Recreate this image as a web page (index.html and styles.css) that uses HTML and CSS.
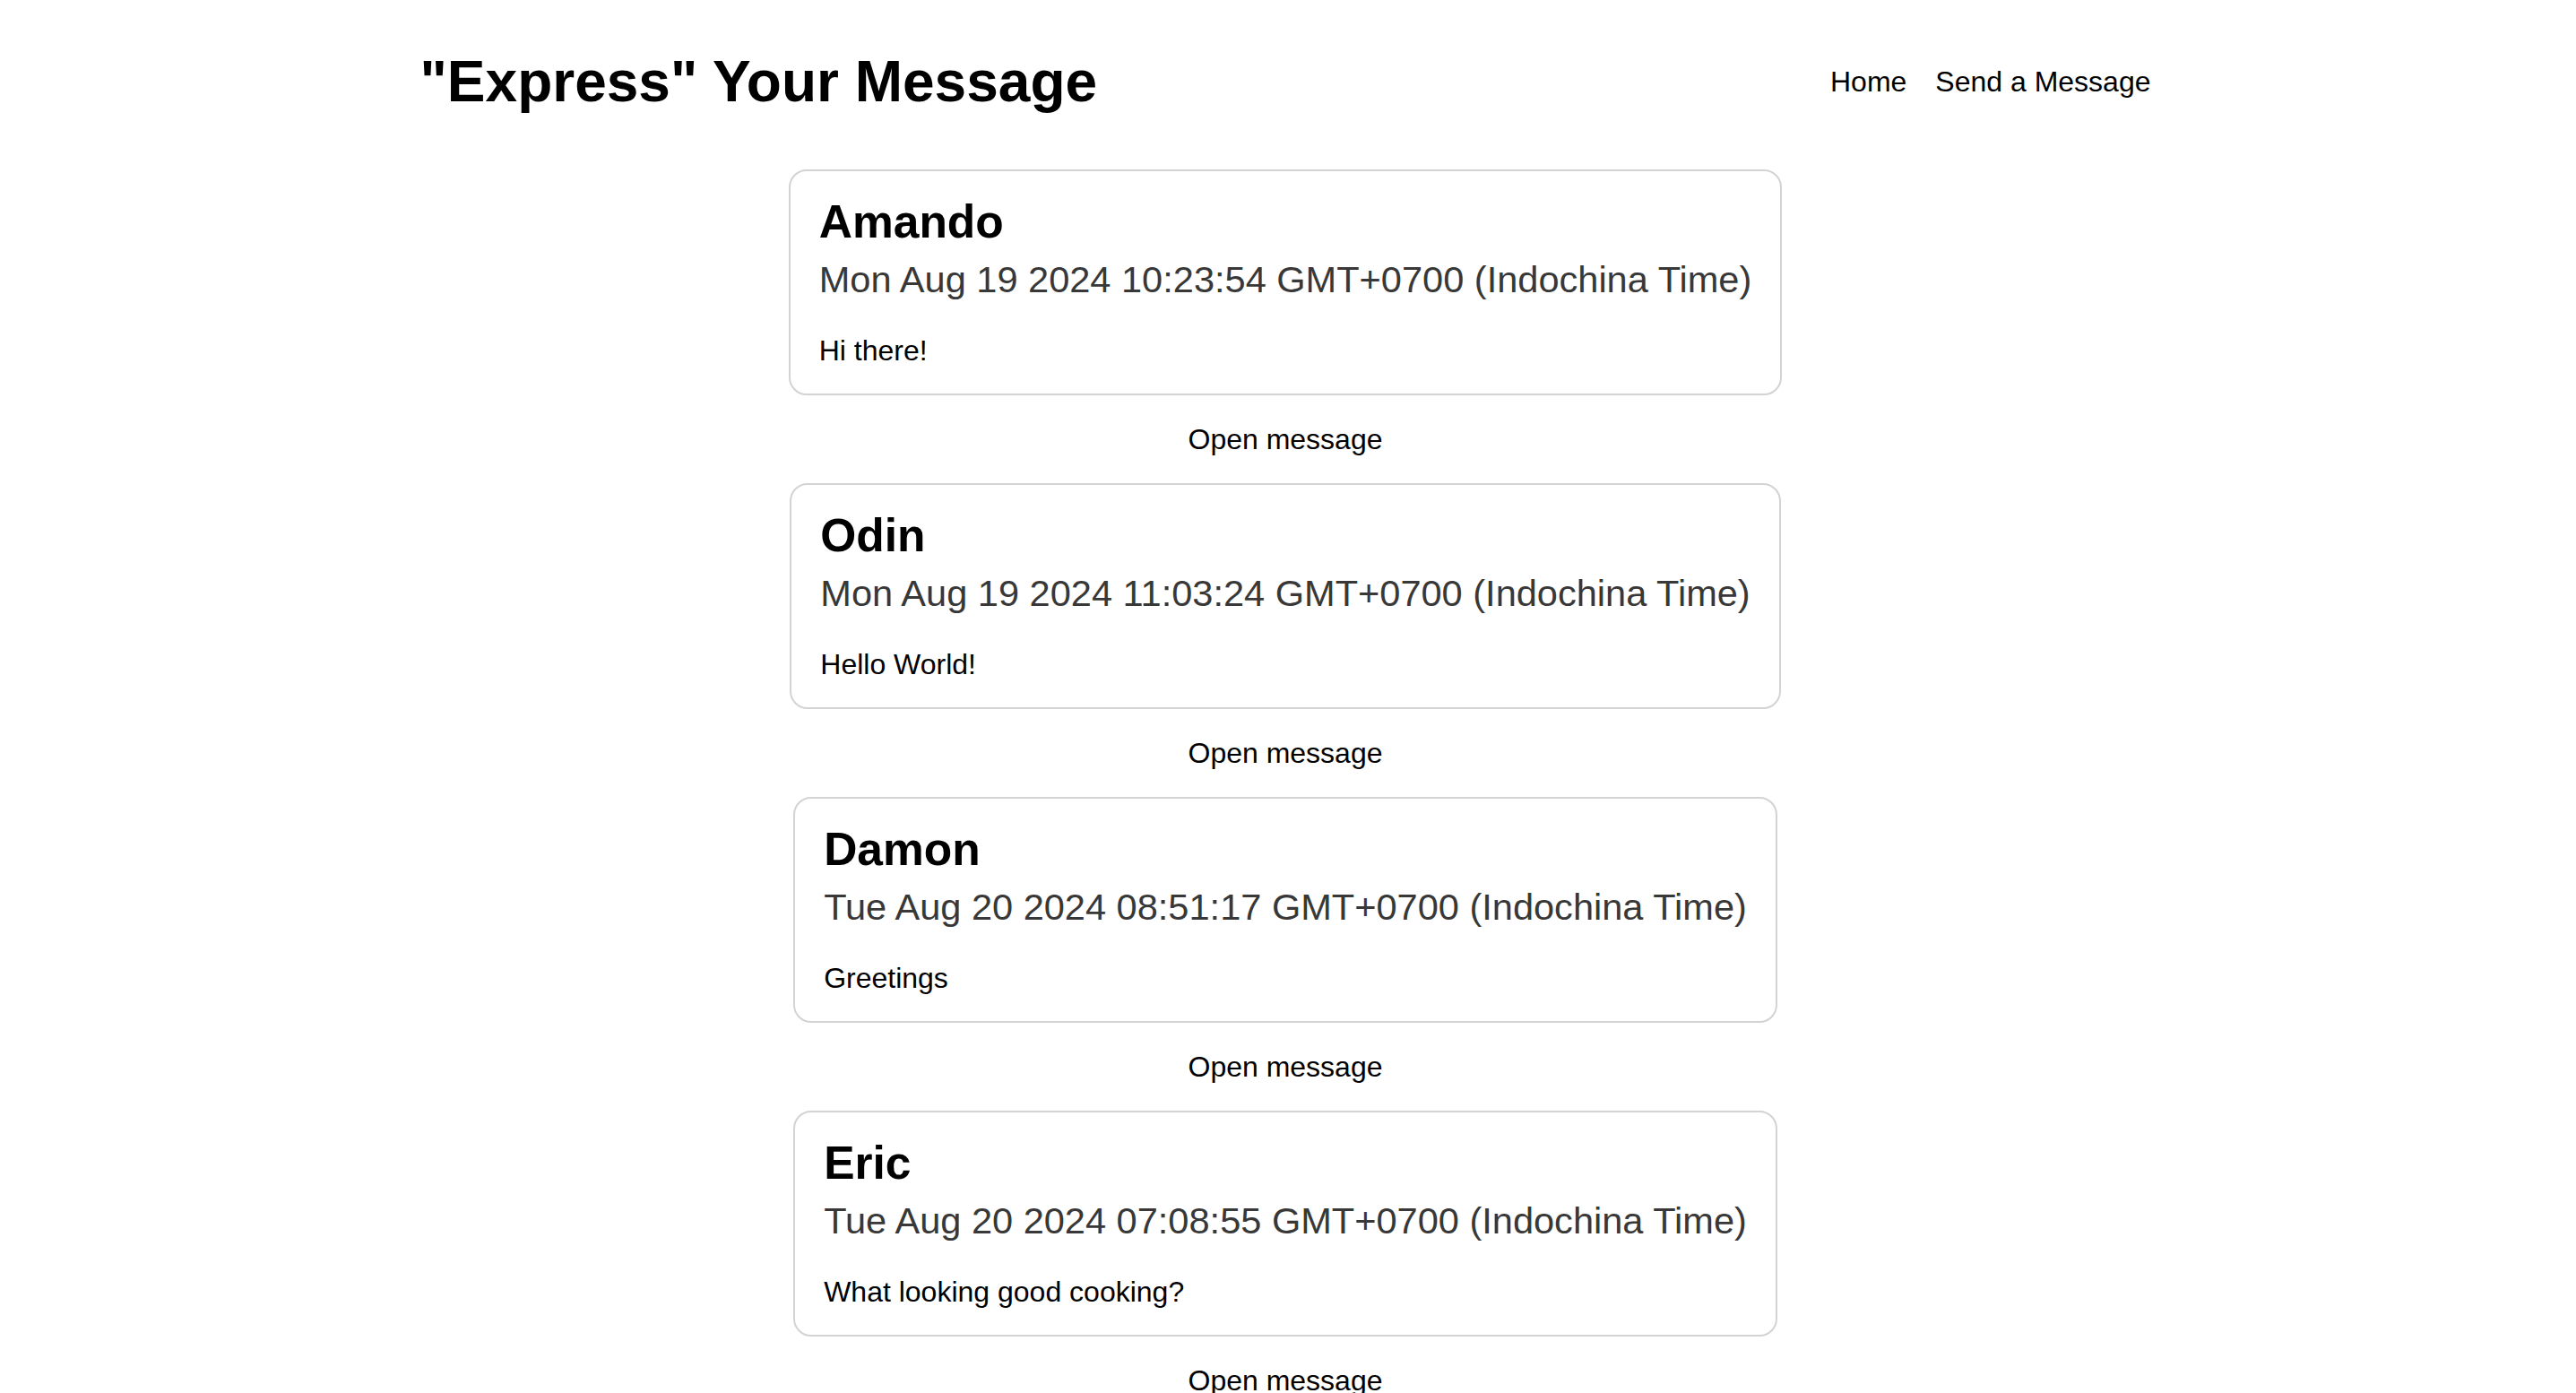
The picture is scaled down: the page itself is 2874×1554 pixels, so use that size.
FILE: index.html
```html
<!DOCTYPE html>
<html lang="en">
<head>
<meta charset="utf-8">
<title>"Express" Your Message</title>
<link rel="stylesheet" href="styles.css">
</head>
<body>
<div class="page">
  <header class="header">
    <h1 class="title">"Express" Your Message</h1>
    <nav class="nav">
      <a class="nav-link" href="#">Home</a>
      <a class="nav-link" href="#">Send a Message</a>
    </nav>
  </header>
  <main class="list">
    <div class="item">
      <div class="card">
        <h2 class="name">Amando</h2>
        <p class="date">Mon Aug 19 2024 10:23:54 GMT+0700 (Indochina Time)</p>
        <p class="text">Hi there!</p>
      </div>
      <a class="open" href="#">Open message</a>
    </div>
    <div class="item">
      <div class="card">
        <h2 class="name">Odin</h2>
        <p class="date">Mon Aug 19 2024 11:03:24 GMT+0700 (Indochina Time)</p>
        <p class="text">Hello World!</p>
      </div>
      <a class="open" href="#">Open message</a>
    </div>
    <div class="item">
      <div class="card">
        <h2 class="name">Damon</h2>
        <p class="date">Tue Aug 20 2024 08:51:17 GMT+0700 (Indochina Time)</p>
        <p class="text">Greetings</p>
      </div>
      <a class="open" href="#">Open message</a>
    </div>
    <div class="item">
      <div class="card">
        <h2 class="name">Eric</h2>
        <p class="date">Tue Aug 20 2024 07:08:55 GMT+0700 (Indochina Time)</p>
        <p class="text">What looking good cooking?</p>
      </div>
      <a class="open" href="#">Open message</a>
    </div>
  </main>
</div>
</body>
</html>
```
FILE: styles.css
```css
* { box-sizing: border-box; }
html, body {
  margin: 0;
  padding: 0;
  background: #fff;
  color: #000;
  font-family: "Liberation Sans", Arial, Helvetica, sans-serif;
}
.page {
  padding-right: 6px;
}
.header {
  max-width: 1931px;
  margin: 0 auto;
  padding-top: 54px;
  display: flex;
  justify-content: space-between;
  align-items: center;
}
.title {
  margin: 0;
  font-size: 64px;
  line-height: 74px;
  font-weight: 700;
}
.nav {
  display: flex;
  gap: 32px;
}
.nav-link {
  font-size: 32px;
  line-height: 37px;
  color: #000;
  text-decoration: none;
}
.list {
  margin-top: 61px;
  display: flex;
  flex-direction: column;
  align-items: center;
}
.item {
  display: flex;
  flex-direction: column;
  align-items: center;
}
.card {
  border: 2px solid #d3d3d3;
  border-radius: 20px;
  padding: 27px 32px 29px;
}
.name {
  margin: 0;
  font-size: 51.5px;
  line-height: 58px;
  font-weight: 700;
}
.date {
  margin: 12px 0 0;
  font-size: 41.55px;
  line-height: 48px;
  color: #383838;
  white-space: nowrap;
}
.text {
  margin: 37px 0 0;
  font-size: 32px;
  line-height: 37px;
}
.open {
  margin: 31px 0 30px;
  font-size: 32px;
  line-height: 37px;
  color: #000;
  text-decoration: none;
}
```
